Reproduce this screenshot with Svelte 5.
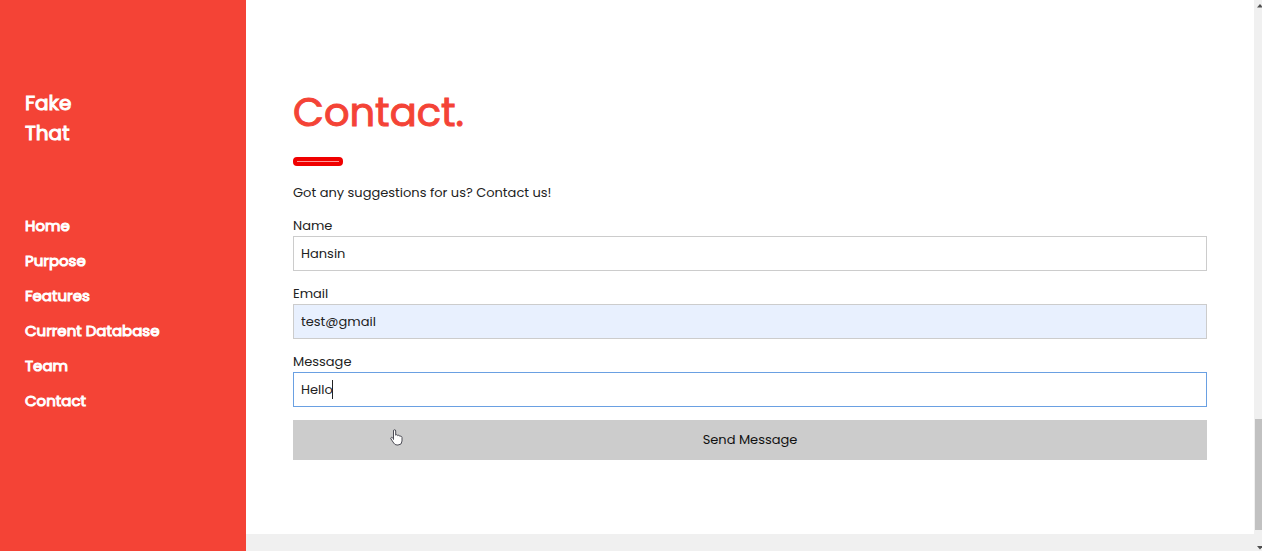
<script>
  const links = ['Home', 'Purpose', 'Features', 'Current Database', 'Team', 'Contact'];
  let name = $state('Hansin');
  let email = $state('test@gmail');
  let message = $state('Hello');
</script>

<div class="page">
  <aside>
    <h3>Fake<br />That</h3>
    <nav>
      {#each links as link}
        <a href={'#' + link.toLowerCase().replace(' ', '-')}>{link}</a>
      {/each}
    </nav>
  </aside>

  <div class="content">
    <main id="contact">
      <h1>Contact.</h1>
      <hr />
      <p>Got any suggestions for us? Contact us!</p>
      <form onsubmit={(e) => e.preventDefault()}>
        <div class="field">
          <label for="name">Name</label>
          <input id="name" type="text" bind:value={name} />
        </div>
        <div class="field">
          <label for="email">Email</label>
          <input id="email" class="autofilled" type="text" bind:value={email} />
        </div>
        <div class="field">
          <label for="message">Message</label>
          <input id="message" class="active" type="text" bind:value={message} />
          <span class="caret"></span>
        </div>
        <button type="submit">
          Send Message
          <svg class="pointer" width="13" height="17" viewBox="0 0 13 17" aria-hidden="true">
            <path d="M3.5 10.5V2Q3.5.7 4.6.7T5.7 2v4.2Q6 5.6 6.8 5.7T7.8 6.7Q8.1 6.1 8.9 6.3T9.9 7.4Q10.3 6.9 11.1 7.2T12 8.5V12Q12 16 8 16H7Q4.8 16 3.7 14L.9 9.8Q.5 8.8 1.4 8.4T3 9.2Z" fill="#fff" stroke="#4c4c55" stroke-width="1" stroke-linejoin="round" />
          </svg>
        </button>
      </form>
    </main>
    <footer></footer>
  </div>

  <div class="scrollbar" aria-hidden="true">
    <svg width="8" height="10" viewBox="0 0 8 10"><path d="M3 7.5 6 4l3 3.5Z" fill="#505050" /></svg>
    <div class="track"><div class="thumb"></div></div>
    <svg width="8" height="21" viewBox="0 0 8 21"><path d="M3 16h6l-3 3.5Z" fill="#505050" /></svg>
  </div>
</div>

<style>
  :global(body) {
    margin: 0;
    font-family: Poppins, Inter, sans-serif;
    font-size: 13px;
    line-height: 20px;
    color: #222;
  }
  .page {
    display: flex;
    min-height: 100vh;
  }
  aside {
    box-sizing: border-box;
    flex: 0 0 246px;
    padding: 88px 25px 0;
    background: #f44336;
    color: #fff;
  }
  h3 {
    margin: 0 0 66px;
    font-size: 20px;
    line-height: 30px;
    font-weight: 400;
    -webkit-text-stroke: 1px #fff;
  }
  nav {
    display: flex;
    flex-direction: column;
    gap: 11px;
  }
  nav a {
    color: #fff;
    font-size: 15px;
    line-height: 24px;
    font-weight: 400;
    -webkit-text-stroke: 1px #fff;
    text-decoration: none;
  }
  .content {
    flex: 1;
    display: flex;
    flex-direction: column;
    min-width: 0;
  }
  main {
    flex: 1;
    padding: 81px 47px 0;
  }
  h1 {
    margin: 0 0 14px;
    font-size: 40px;
    line-height: 62px;
    font-weight: 400;
    -webkit-text-stroke: 1px #f44336;
    color: #f44336;
  }
  hr {
    box-sizing: border-box;
    width: 50px;
    height: 9px;
    margin: 0 0 17px;
    border: 4px solid #f00000;
    border-radius: 4px;
    background: #f99;
  }
  p {
    margin: 0 0 13px;
  }
  .field {
    position: relative;
    margin-bottom: 13px;
  }
  .field + .field {
    margin-top: 13px;
  }
  label {
    display: block;
  }
  input {
    display: block;
    box-sizing: border-box;
    width: 100%;
    height: 35px;
    padding: 0 7px;
    border: 1px solid #ccc;
    border-radius: 0;
    background: #fff;
    font: inherit;
    color: #222;
    outline: none;
  }
  .autofilled {
    background: #e8f0fe;
  }
  .active,
  input:focus {
    border-color: #6aa0e2;
  }
  .caret {
    position: absolute;
    left: 39px;
    bottom: 8px;
    width: 1px;
    height: 19px;
    background: #222;
  }
  button {
    position: relative;
    display: block;
    width: 100%;
    height: 40px;
    padding: 0;
    border: 0;
    background: #ccc;
    font: inherit;
    color: #111;
    cursor: pointer;
  }
  .pointer {
    position: absolute;
    left: 97px;
    top: 9px;
  }
  footer {
    height: 17px;
    background: #f0f0f0;
  }
  .scrollbar {
    display: flex;
    flex-direction: column;
    flex: 0 0 8px;
    background: #f0f0f0;
  }
  .scrollbar svg {
    display: block;
  }
  .track {
    flex: 1;
    display: flex;
    flex-direction: column;
    justify-content: flex-end;
  }
  .thumb {
    height: 21.3%;
    margin-left: 1px;
    background: #c1c1c1;
  }
</style>
